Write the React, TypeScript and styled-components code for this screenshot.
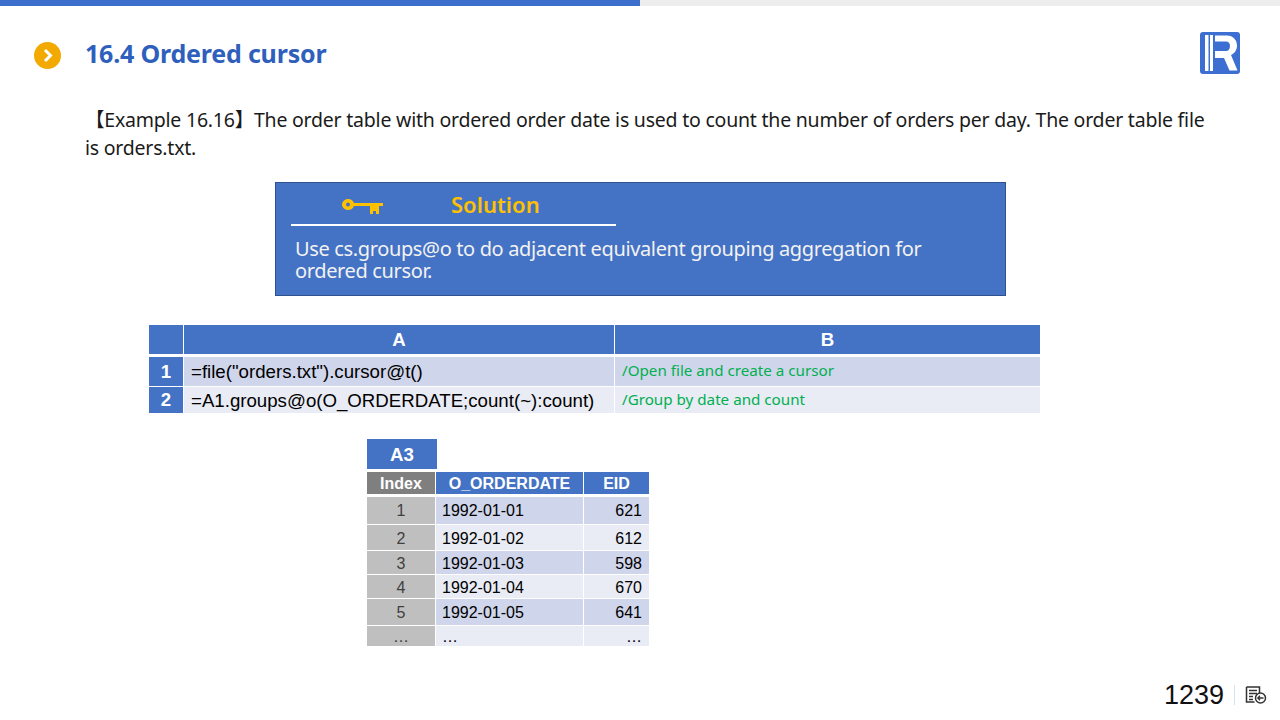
import React from 'react'
import styled, { createGlobalStyle } from 'styled-components'

const scriptRows = [
  { id: '1', formula: '=file("orders.txt").cursor@t()', note: '/Open file and create a cursor', height: 29, dark: true },
  { id: '2', formula: '=A1.groups@o(O_ORDERDATE;count(~):count)', note: '/Group by date and count', height: 26, dark: false }
]

const resultRows = [
  { index: '1', date: '1992-01-01', eid: '621', height: 27 },
  { index: '2', date: '1992-01-02', eid: '612', height: 25 },
  { index: '3', date: '1992-01-03', eid: '598', height: 23 },
  { index: '4', date: '1992-01-04', eid: '670', height: 23 },
  { index: '5', date: '1992-01-05', eid: '641', height: 26 },
  { index: '…', date: '…', eid: '…', height: 20 }
]

const App = () => (
  <Slide>
    <GlobalStyle />
    <Progress />
    <Header>
      <Bullet>
        <svg width="27" height="27" viewBox="0 0 27 27">
          <circle cx="13.5" cy="13.5" r="13.5" fill="#f2a900" />
          <path d="M11 8l5.500 5.500-5.500 5.500" fill="none" stroke="#fff" strokeWidth="3" />
        </svg>
      </Bullet>
      <Title>16.4 Ordered cursor</Title>
      <Logo>
        <svg width="40" height="42" viewBox="0 0 40 42">
          <rect width="40" height="42" rx="3" fill="#3c6fd1" />
          <path d="M5 3h3.500v36H5zM10 3h3v36h-3z" fill="#fff" />
          <path
            d="M15 3.500h12c6 0 10 4.500 10 10 0 4.500-2.500 8-6 9.500l6.500 15.500h-8L24 26h-9v-7h11c2.500 0 4-2 4-5s-1.500-4.500-4-4.500H15z"
            fill="#fff"
          />
        </svg>
      </Logo>
    </Header>

    <Intro>
      【Example 16.16】The order table with ordered order date is used to count the number of orders per day. The order
      table file is orders.txt.
    </Intro>

    <SolutionBox>
      <SolutionHead>
        <KeyIcon>
          <svg width="43" height="17" viewBox="0 0 43 17">
            <path
              d="M7 1c3 0 5 1.500 6 4h29v3h-4v8h-3v-3h-3v3h-3V8H13c-1 2.500-3 4-6 4S1 9.500 1 6.500 4 1 7 1zm0 3.500a2 2 0 1 0 0 4 2 2 0 0 0 0-4z"
              fill="#ffc000"
              fillRule="evenodd"
            />
          </svg>
        </KeyIcon>
        <SolutionTitle>Solution</SolutionTitle>
      </SolutionHead>
      <SolutionText>Use cs.groups@o to do adjacent equivalent grouping aggregation for ordered cursor.</SolutionText>
    </SolutionBox>

    <ScriptTable>
      <ScriptHead />
      <ScriptHead>A</ScriptHead>
      <ScriptHead>B</ScriptHead>
      {scriptRows.map(row => (
        <React.Fragment key={row.id}>
          <RowNumber $height={row.height}>{row.id}</RowNumber>
          <Formula $dark={row.dark}>{row.formula}</Formula>
          <Note $dark={row.dark}>{row.note}</Note>
        </React.Fragment>
      ))}
    </ScriptTable>

    <ResultBlock>
      <CellName>A3</CellName>
      <ResultTable>
        <IndexHead>Index</IndexHead>
        <ResultHead>O_ORDERDATE</ResultHead>
        <ResultHead>EID</ResultHead>
        {resultRows.map((row, i) => (
          <React.Fragment key={i}>
            <IndexCell $height={row.height} $first={i === 0}>
              {row.index}
            </IndexCell>
            <DateCell $dark={i % 2 === 0} $first={i === 0}>
              {row.date}
            </DateCell>
            <EidCell $dark={i % 2 === 0} $first={i === 0}>
              {row.eid}
            </EidCell>
          </React.Fragment>
        ))}
      </ResultTable>
    </ResultBlock>

    <Footer>
      <PageNumber>1239</PageNumber>
      <FooterRule />
      <svg width="22" height="18" viewBox="0 0 22 18">
        <path d="M1.500 1h13v6M1.500 1v15h8" fill="none" stroke="#333" strokeWidth="1.500" />
        <path d="M4 4.500h8M4 7.500h8M4 10.500h4M4 13.500h4" stroke="#333" strokeWidth="1.300" />
        <circle cx="15.500" cy="12" r="5" fill="#fff" stroke="#333" strokeWidth="1.500" />
        <path d="M18.500 12h-5.500M15 9.800L12.800 12l2.200 2.200" fill="none" stroke="#333" strokeWidth="1.300" />
      </svg>
    </Footer>
  </Slide>
)

export default App

const GlobalStyle = createGlobalStyle`
  html, body {
    margin: 0;
    padding: 0;
    background: #fff;
  }
`

const Slide = styled.div`
  width: 1280px;
  height: 720px;
  overflow: hidden;
  display: flex;
  flex-direction: column;
  font-family: 'Noto Sans', 'Noto Sans CJK SC', sans-serif;
`

const Progress = styled.div`
  height: 6px;
  flex: none;
  background: linear-gradient(to right, #3c6fcb 50%, #ededed 50%);
`

const Header = styled.header`
  display: flex;
  align-items: flex-start;
  padding: 26px 40px 0 34px;
`

const Bullet = styled.div`
  height: 27px;
  margin-top: 10px;
  svg {
    display: block;
  }
`

const Title = styled.h1`
  margin: 4px 0 0 24px;
  font-size: 25px;
  line-height: 34px;
  font-weight: 700;
  letter-spacing: -0.2px;
  color: #2f5fbd;
`

const Logo = styled.div`
  margin-left: auto;
  height: 42px;
  svg {
    display: block;
  }
`

const Intro = styled.p`
  margin: 32px 70px 0 85px;
  font-size: 19.5px;
  line-height: 28px;
  letter-spacing: -0.22px;
  color: #1a1a1a;
`

const SolutionBox = styled.section`
  box-sizing: border-box;
  width: 731px;
  height: 114px;
  margin: 20px 0 0 275px;
  padding: 9px 15px 0;
  border: 1px solid #2f528f;
  background: #4472c4;
`

const SolutionHead = styled.div`
  width: 325px;
  height: 26px;
  padding-bottom: 6px;
  display: flex;
  align-items: center;
  border-bottom: 2px solid #fff;
`

const KeyIcon = styled.div`
  height: 17px;
  margin: 3px 0 0 50px;
  svg {
    display: block;
  }
`

const SolutionTitle = styled.div`
  margin: 0 0 2px 67px;
  font-size: 22px;
  font-weight: 600;
  color: #ffc000;
`

const SolutionText = styled.p`
  margin: 12px 60px 0 4px;
  font-size: 20px;
  line-height: 22px;
  letter-spacing: -0.36px;
  color: #f2f2f2;
`

const ScriptTable = styled.div`
  display: grid;
  width: 891px;
  margin: 29px 0 0 149px;
  grid-template-columns: 34px 431px 426px;
  font-family: 'Liberation Sans', Arial, sans-serif;
`

const ScriptHead = styled.div`
  height: 29px;
  margin-bottom: 3px;
  border-left: 1px solid #fff;
  background: #4472c4;
  color: #fff;
  font-size: 18.67px;
  font-weight: 700;
  line-height: 30px;
  text-align: center;
  &:first-child {
    border-left: none;
  }
`

const RowNumber = styled.div<{ $height: number }>`
  height: ${p => p.$height}px;
  margin-bottom: 1px;
  background: #4472c4;
  color: #fff;
  font-size: 18.67px;
  font-weight: 700;
  line-height: ${p => p.$height}px;
  text-align: center;
`

const Formula = styled.div<{ $dark: boolean }>`
  margin-bottom: 1px;
  padding: ${p => (p.$dark ? 0 : 2)}px 0 0 7px;
  border-left: 1px solid #fff;
  background: ${p => (p.$dark ? '#cfd5ea' : '#e9ebf5')};
  color: #000;
  font-size: 18.67px;
  display: flex;
  align-items: center;
`

const Note = styled.div<{ $dark: boolean }>`
  margin-bottom: 1px;
  padding: 0 0 ${p => (p.$dark ? 4 : 2)}px 7px;
  border-left: 1px solid #fff;
  background: ${p => (p.$dark ? '#cfd5ea' : '#e9ebf5')};
  color: #00b050;
  font-family: 'Noto Sans', sans-serif;
  font-size: 15.2px;
  display: flex;
  align-items: center;
`

const ResultBlock = styled.div`
  width: 282px;
  margin: 25px 0 0 367px;
  font-family: 'Liberation Sans', Arial, sans-serif;
`

const CellName = styled.div`
  width: 70px;
  height: 30px;
  background: #4472c4;
  color: #fff;
  font-size: 18.67px;
  font-weight: 700;
  line-height: 32px;
  text-align: center;
`

const ResultTable = styled.div`
  display: grid;
  margin-top: 3px;
  grid-template-columns: 69px 148px 65px;
`

const IndexHead = styled.div`
  height: 22px;
  background: #7f7f7f;
  color: #fff;
  font-size: 16px;
  font-weight: 700;
  line-height: 23px;
  text-align: center;
  border-right: 1px solid #fff;
`

const ResultHead = styled.div`
  height: 22px;
  background: #4472c4;
  color: #fff;
  font-size: 16px;
  font-weight: 700;
  line-height: 23px;
  text-align: center;
  border-right: 1px solid #fff;
  &:nth-child(3) {
    border-right: none;
  }
`

const IndexCell = styled.div<{ $height: number; $first: boolean }>`
  height: ${p => p.$height}px;
  margin-top: ${p => (p.$first ? 3 : 1)}px;
  background: #bfbfbf;
  color: #404040;
  font-size: 16px;
  line-height: ${p => p.$height + (p.$first ? 0 : 2)}px;
  text-align: center;
  border-right: 1px solid #fff;
`

const DateCell = styled.div<{ $dark: boolean; $first: boolean }>`
  margin-top: ${p => (p.$first ? 3 : 1)}px;
  padding: ${p => (p.$first ? 0 : 2)}px 0 0 6px;
  background: ${p => (p.$dark ? '#cfd5ea' : '#e9ebf5')};
  color: #000;
  font-size: 16px;
  display: flex;
  align-items: center;
  border-right: 1px solid #fff;
`

const EidCell = styled.div<{ $dark: boolean; $first: boolean }>`
  margin-top: ${p => (p.$first ? 3 : 1)}px;
  padding: ${p => (p.$first ? 0 : 2)}px 7px 0 0;
  background: ${p => (p.$dark ? '#cfd5ea' : '#e9ebf5')};
  color: #000;
  font-size: 16px;
  display: flex;
  align-items: center;
  justify-content: flex-end;
`

const Footer = styled.footer`
  margin-top: auto;
  padding: 0 13px 10px 0;
  display: flex;
  align-items: center;
  justify-content: flex-end;
  font-family: 'Liberation Sans', Arial, sans-serif;
`

const PageNumber = styled.div`
  font-size: 27px;
  line-height: 30px;
  color: #111;
`

const FooterRule = styled.div`
  width: 1px;
  height: 20px;
  margin: 0 10px;
  background: #d6e0ef;
`
